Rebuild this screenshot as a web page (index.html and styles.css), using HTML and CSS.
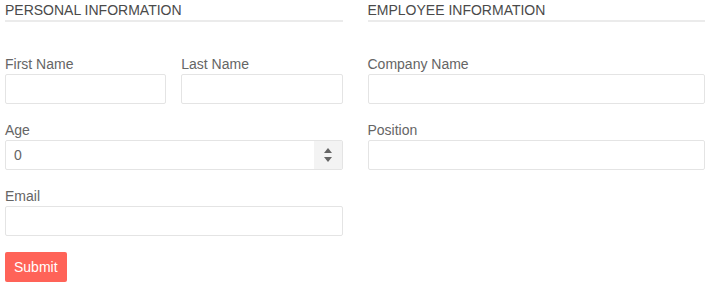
FILE: index.html
```html
<!DOCTYPE html>
<html lang="en">
<head>
  <meta charset="UTF-8">
  <title>Employee Form</title>
  <link rel="stylesheet" href="styles.css">
</head>
<body>
  <form class="form">
    <div class="columns">
      <fieldset class="section">
        <legend class="section-title">Personal Information</legend>
        <div class="row two">
          <div class="field">
            <label>First Name</label>
            <input type="text" class="textbox">
          </div>
          <div class="field">
            <label>Last Name</label>
            <input type="text" class="textbox">
          </div>
        </div>
        <div class="field">
          <label>Age</label>
          <div class="numeric">
            <input type="text" class="numeric-input" value="0">
            <span class="spin">
              <span class="arrow up"></span>
              <span class="arrow down"></span>
            </span>
          </div>
        </div>
        <div class="field">
          <label>Email</label>
          <input type="text" class="textbox">
        </div>
      </fieldset>

      <fieldset class="section">
        <legend class="section-title">Employee Information</legend>
        <div class="field">
          <label>Company Name</label>
          <input type="text" class="textbox">
        </div>
        <div class="field">
          <label>Position</label>
          <input type="text" class="textbox">
        </div>
      </fieldset>
    </div>
    <button type="button" class="submit">Submit</button>
  </form>
</body>
</html>
```

FILE: styles.css
```css
body {
  margin: 0;
  font-family: 'Liberation Sans', Arial, sans-serif;
  font-size: 14px;
  color: #656565;
  background: #fff;
}
.form {
  padding: 2px 10px 0 5px;
}
.columns {
  display: grid;
  grid-template-columns: 1fr 1fr;
  column-gap: 25px;
}
.section {
  border: none;
  margin: 0;
  padding: 0;
  min-width: 0;
}
.section-title {
  display: block;
  width: 100%;
  padding: 0 0 1px;
  margin: 0 0 33px;
  line-height: 17px;
  text-transform: uppercase;
  color: #4a4a4a;
  border-bottom: 2px solid #ebebeb;
}
.row.two {
  display: grid;
  grid-template-columns: 1fr 1fr;
  column-gap: 15px;
}
.field {
  margin-bottom: 17px;
}
.field label {
  display: block;
  line-height: 17px;
  padding-top: 1px;
  margin-bottom: 1px;
}
.textbox, .numeric {
  box-sizing: border-box;
  width: 100%;
  height: 30px;
  border: 1px solid #e4e4e4;
  border-radius: 2px;
  background: #fff;
  font: inherit;
  color: #656565;
  outline: none;
}
.numeric {
  display: flex;
}
.numeric-input {
  flex: 1;
  min-width: 0;
  border: none;
  padding: 0 8px;
  font: inherit;
  color: #656565;
  background: transparent;
  outline: none;
}
.spin {
  width: 28px;
  background: #f3f3f3;
  display: flex;
  flex-direction: column;
  align-items: center;
  justify-content: center;
  gap: 4px;
}
.arrow {
  width: 0;
  height: 0;
  border-left: 4px solid transparent;
  border-right: 4px solid transparent;
}
.arrow.up { border-bottom: 5px solid #656565; }
.arrow.down { border-top: 5px solid #656565; }
.submit {
  margin-top: -1px;
  height: 30px;
  padding: 0 9px;
  border: none;
  border-radius: 2px;
  background: #ff6358;
  color: #fff;
  font: inherit;
  cursor: pointer;
}
```
